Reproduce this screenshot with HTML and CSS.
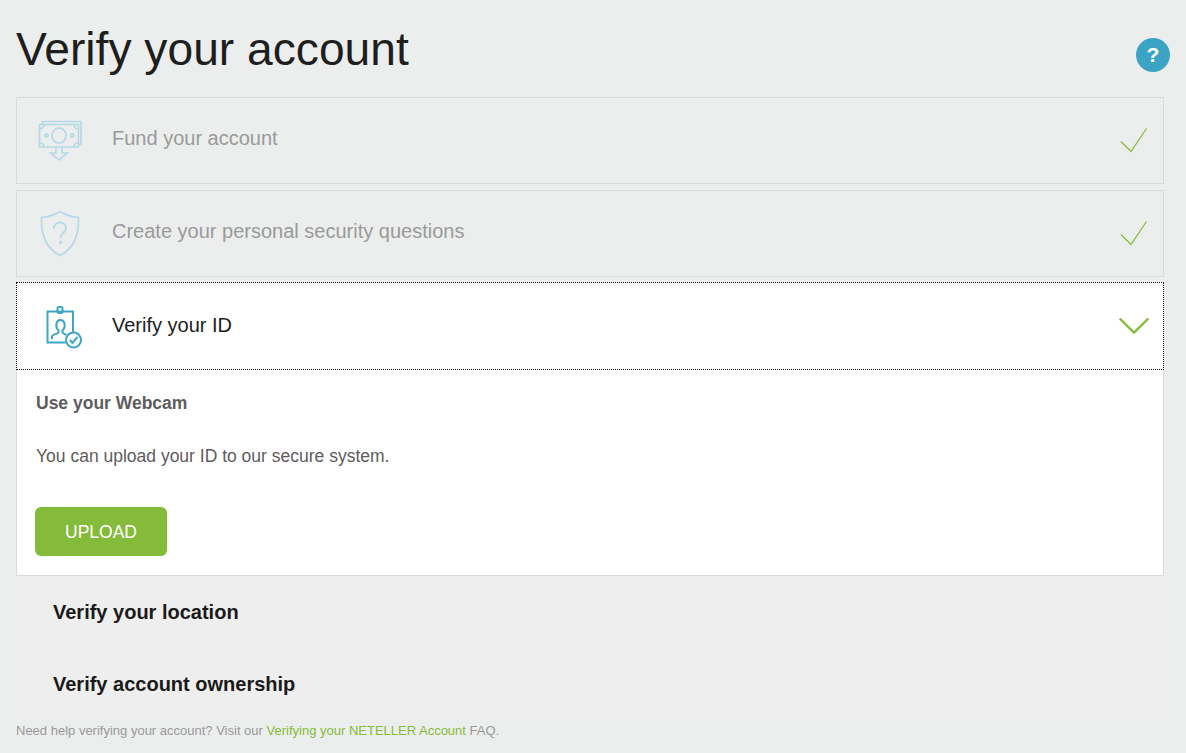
FILE: index.html
```html
<!DOCTYPE html>
<html lang="en">
<head>
<meta charset="utf-8">
<title>Verify your account</title>
<link rel="stylesheet" href="styles.css">
</head>
<body>
<main class="page">
  <header class="head">
    <h1 class="title">Verify your account</h1>
    <a class="help" href="#">?</a>
  </header>

  <section class="step done">
    <svg class="icon" viewBox="0 1 44 44" width="44" height="44" fill="none" stroke="#b5d9e5" stroke-width="1.700">
      <path d="M4.500 6V3.500H43V26.500H41"/>
      <path d="M1.500 6.500H40.500V29H1.500Z"/>
      <path d="M1.500 11a4.500 4.500 0 0 0 4.500-4.500M36 6.500a4.500 4.500 0 0 0 4.500 4.500M1.500 24.500a4.500 4.500 0 0 1 4.500 4.500M40.500 24.500a4.500 4.500 0 0 0-4.500 4.500"/>
      <ellipse cx="21" cy="17.500" rx="7" ry="7.500"/>
      <circle cx="8.500" cy="17.500" r="1.600"/>
      <circle cx="34" cy="17.500" r="1.600"/>
      <path d="M18 29.500V35H12.500L21 42L29.500 35H24V29.500"/>
    </svg>
    <span class="label">Fund your account</span>
    <svg class="mark" viewBox="0 0 28 26" width="28" height="26" fill="none" stroke="#86bc3a" stroke-width="1.300"><path d="M1 14.500L11 24.500L26.500 1.500"/></svg>
  </section>

  <section class="step done">
    <svg class="icon" viewBox="0 -1 44 50" width="44" height="50" fill="none" stroke="#b5d9e5" stroke-width="1.700">
      <path d="M22 1.500C16.500 5 10 7 3.500 7.500C3 24 7 38 22 45.500C37 38 41 24 40.500 7.500C34 7 27.500 5 22 1.500Z"/>
      <path d="M16 18.500C16 14.500 19 12.500 22 12.500C25.500 12.500 28 15 28 18C28 22.500 22.500 23 22.500 28" stroke-width="2"/>
      <circle cx="22.500" cy="32.500" r="1.700" fill="#b5d9e5" stroke="none"/>
    </svg>
    <span class="label">Create your personal security questions</span>
    <svg class="mark" viewBox="0 0 28 26" width="28" height="26" fill="none" stroke="#86bc3a" stroke-width="1.300"><path d="M1 14.500L11 24.500L26.500 1.500"/></svg>
  </section>

  <section class="panel">
    <div class="step active">
      <svg class="icon id-icon" viewBox="0 0 44 44" width="44" height="44" fill="none" stroke="#3ea5c6" stroke-width="2">
        <path d="M28 27V6.500H2.500V37.500H20.500"/>
        <rect x="12.500" y="2" width="5" height="6" rx="1.500"/>
        <path d="M7 34V31.500C7 29.500 13 29 13.500 27.500V25.500C11.500 23.500 11 21 11.500 18.500C12 16 13.500 15 15.500 15C17.500 15 19 16 19.500 18.500C20 21 19.500 23.500 17.500 25.500V27.500C18 28.500 20 29 21.500 30"/>
        <circle cx="28.500" cy="35" r="7.500" fill="#fff"/>
        <path d="M24.800 35L27.500 38L32.500 31.800"/>
      </svg>
      <span class="label">Verify your ID</span>
      <svg class="chev" viewBox="0 0 30 18" width="30" height="18" fill="none" stroke="#86bc3a" stroke-width="2.400"><path d="M0.700 1.500L15 15.500L29.300 1.500"/></svg>
    </div>
    <div class="content">
      <h2 class="sub">Use your Webcam</h2>
      <p class="text">You can upload your ID to our secure system.</p>
      <a class="btn" href="#">UPLOAD</a>
    </div>
  </section>

  <section class="pending">
    <h3 class="pending-item">Verify your location</h3>
    <h3 class="pending-item">Verify account ownership</h3>
  </section>

  <p class="foot">Need help verifying your account? Visit our <a href="#">Verifying your NETELLER Account</a> FAQ.</p>
</main>
</body>
</html>
```
FILE: styles.css
```css
* { box-sizing: border-box; }
html, body { margin: 0; padding: 0; }
body {
  background: #eceeed;
  font-family: "Liberation Sans", Arial, sans-serif;
  color: #1e1e1e;
}
.page { width: 1186px; height: 753px; padding: 0 22px 0 16px; overflow: hidden; }
.head { display: flex; justify-content: space-between; height: 97px; }
.title { margin: 21px 0 0; font-size: 46.2px; line-height: 56px; font-weight: 400; color: #1e1e1e; }
.help {
  flex: none;
  width: 34px; height: 34px;
  margin: 38px -6px 0 0;
  border-radius: 50%;
  background: #3ba4c5;
  color: #fff;
  font-size: 21px; font-weight: 700; line-height: 34px;
  text-align: center; text-decoration: none;
}
.step {
  display: flex; align-items: center;
  height: 87px;
  border: 1px solid #d9dbda;
  margin-bottom: 6px;
  padding: 0 15px 0 95px;
  position: relative;
}
.step .icon { position: absolute; left: 21px; top: 50%; transform: translateY(-50%); }
.step .id-icon { left: 28px; top: calc(50% + 1px); }
.label { flex: 1; font-size: 20px; line-height: 24px; margin-top: -2px; }
.done .label { color: #9a9a9a; margin-top: -6px; }
.mark { margin-top: -2px; }
.panel { background: #fff; border: 1px solid #d9dbda; border-top: 0; margin-top: -1px; }
.step.active {
  height: 88px; margin: 0 -1px;
  background: #fff;
  border: 1px dotted #111;
  padding-right: 14px;
}
.content { padding: 21px 18px 19px 19px; color: #605c5d; }
.sub { margin: 0; font-size: 17.5px; line-height: 24px; font-weight: 700; }
.text { margin: 29px 0 0; font-size: 17.5px; line-height: 24px; }
.btn {
  display: block; width: 132px; height: 49px;
  margin: 39px 0 0 -1px;
  border-radius: 6px;
  background: #85bb3a;
  color: #fff;
  font-size: 17.5px; line-height: 51px;
  text-align: center; text-decoration: none;
}
.pending { height: 143px; background: #eeeeee; padding: 0 0 0 37px; }
.pending-item { margin: 0; height: 72px; font-size: 20px; line-height: 72px; font-weight: 700; color: #1a1a1a; }
.foot { margin: 3px 0 0; font-size: 13px; line-height: 18px; color: #999; }
.foot a { color: #85bb3a; text-decoration: none; }
```
